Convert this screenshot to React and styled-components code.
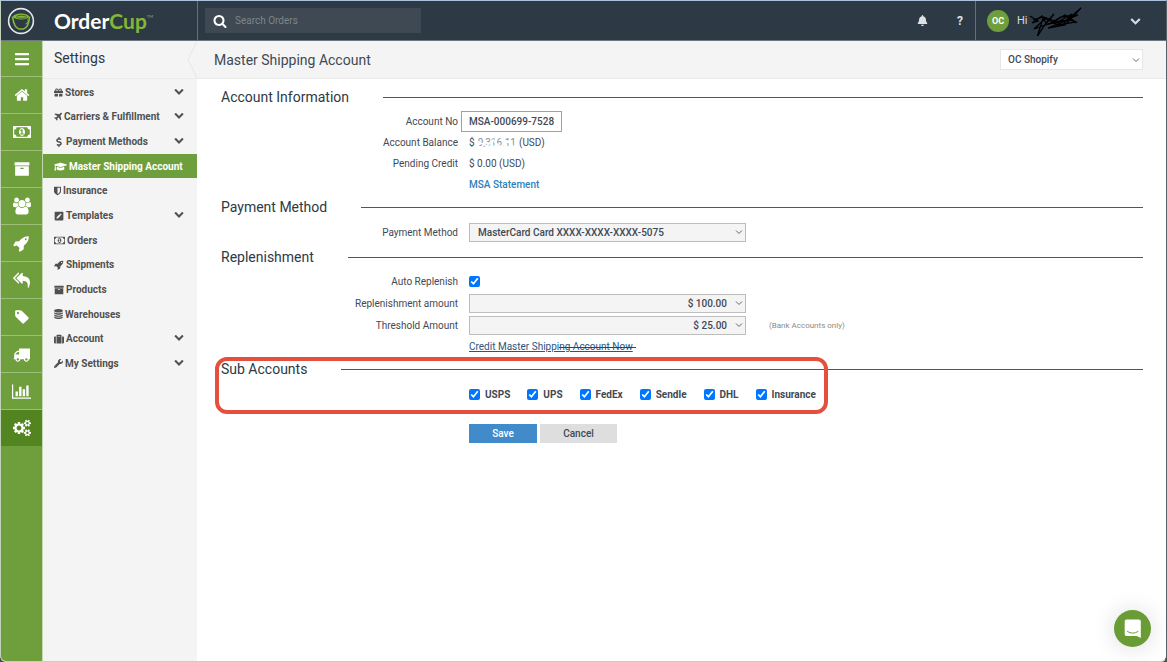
import styled, { createGlobalStyle } from "styled-components"
import {
  FaBars,
  FaBell,
  FaDollarSign,
  FaGift,
  FaGraduationCap,
  FaPenSquare,
  FaSuitcase,
  FaWrench,
} from "react-icons/fa"


const GlobalStyle = createGlobalStyle`
  * {
    box-sizing: border-box;
  }

  body {
    margin: 0;
    background: #4a4a4a;
    color: #3f4954;
    font-family: Roboto, "Liberation Sans", sans-serif;
    font-size: 10px;
  }

  button, input, select {
    font: inherit;
    color: inherit;
  }
`

const Page = styled.div`
  position: relative;
  display: flex;
  flex-direction: column;
  min-height: 100vh;
  background: #fff;
  border: 1px solid #c3d3bb;
  border-top-color: #a9c1db;
  border-right-color: #5b6169;
  border-radius: 0 0 6px 6px;
  overflow: hidden;
`

const TopBar = styled.header`
  display: flex;
  align-items: center;
  height: 40px;
  background: #2d3945;
  border-bottom: 1px solid #6d7780;
  color: #fff;
`

const Brand = styled.a`
  display: flex;
  align-items: center;
  align-self: stretch;
  gap: 19px;
  width: 197px;
  padding-left: 6px;
  border-right: 1px solid #65707a;
  color: #fff;
  text-decoration: none;
`

const BrandName = styled.span`
  font-family: Lato, sans-serif;
  font-size: 21px;
  font-weight: 700;
  line-height: 28px;
`

const BrandAccent = styled.span`
  color: #83b735;
`

const Trademark = styled.sup`
  color: #9aa2a9;
  font-size: 4px;
  font-weight: 400;
  line-height: 0;
  vertical-align: 11px;
`

const SearchBox = styled.label`
  display: flex;
  align-items: center;
  gap: 8px;
  width: 216px;
  height: 25px;
  margin-left: 7px;
  padding-left: 8px;
  background: #3e4954;
`

const SearchInput = styled.input`
  flex: 1;
  min-width: 0;
  padding: 0;
  border: 0;
  outline: 0;
  background: none;

  &::placeholder {
    color: #7f8589;
    opacity: 1;
  }
`

const TopButton = styled.button`
  display: grid;
  place-items: center;
  width: 30px;
  height: 38px;
  padding: 0;
  border: 0;
  background: none;
  color: #dfe2e4;
  font-weight: 700;
  font-size: 12px;
`

const TopActions = styled.div`
  display: flex;
  gap: 8px;
  margin-left: auto;
`

const UserMenu = styled.button`
  display: flex;
  align-items: center;
  align-self: stretch;
  width: 191px;
  padding: 0 25px 0 11px;
  border: 0;
  border-left: 1px solid #65707a;
  background: none;
  color: #d5d9dc;
  font-size: 11px;

  > svg {
    margin-left: auto;
  }
`

const Avatar = styled.span`
  width: 22px;
  margin-right: 8px;
  border-radius: 50%;
  background: #6f9f3c;
  color: #fff;
  font-size: 9px;
  font-weight: 700;
  line-height: 22px;
  text-align: center;
`

const Greeting = styled.span`
  position: relative;
`

const Scribble = styled.svg`
  position: absolute;
  left: 11px;
  top: -12px;
`

const Body = styled.div`
  display: flex;
  flex: 1;
`

const Rail = styled.nav`
  flex: none;
  width: 42px;
  background: #6f9f3c;
  border-right: 1px solid #c3d8ad;
`

const RailLink = styled.a`
  display: grid;
  place-items: center;
  height: 37px;
  border-bottom: 1px solid #9dbf7a;
  background: ${props => props.$active ? "#52841f" : "none"};
  color: #fff;

  &:first-child {
    height: 36px;
  }

  &:last-child {
    border-bottom-color: #6f9f3c;
  }
`

const Sidebar = styled.aside`
  flex: none;
  width: 154px;
  background: #f4f4f4;
`

const SidebarHead = styled.div`
  display: flex;
  justify-content: space-between;
  height: 38px;
  padding-left: 11px;
  border-bottom: 1px solid #ebebeb;
`

const SidebarTitle = styled.h2`
  margin: 0;
  color: #2d3945;
  font-size: 14px;
  font-weight: 400;
  line-height: 34px;
`

const Menu = styled.nav`
  display: grid;
  grid-auto-rows: 1fr;
  min-height: 297px;
  padding-top: 1px;
`

const MenuLink = styled.a`
  display: flex;
  align-items: center;
  gap: 2px;
  margin-bottom: 1px;
  padding: 1px 13px 0 11px;
  background: ${props => props.$active ? "#6f9f3c" : "none"};
  color: ${props => props.$active ? "#fff" : "#505050"};
  font-weight: 700;
  text-decoration: none;
  white-space: nowrap;
`

const Caret = styled.span`
  display: flex;
  margin-left: auto;
  padding-bottom: 3px;
`

const Main = styled.main`
  flex: 1;
  min-width: 0;
`

const PageHead = styled.div`
  display: flex;
  align-items: center;
  justify-content: space-between;
  height: 38px;
  padding: 0 23px 0 17px;
  background: #f4f4f4;
  border-bottom: 1px solid #ebebeb;
`

const PageTitle = styled.h1`
  margin: 0;
  font-size: 14px;
  font-weight: 400;
`

const SelectWrap = styled.span`
  display: inline-grid;
  align-items: center;
  width: ${props => props.$width}px;

  > * {
    grid-area: 1 / 1;
  }

  > svg {
    justify-self: end;
    margin-right: 3px;
    pointer-events: none;
  }
`

const SelectBox = styled.select`
  width: 100%;
  height: ${props => props.$light ? 21 : 19}px;
  padding: 0 18px 0 ${props => props.$light ? 7 : 8}px;
  appearance: none;
  border: 1px solid ${props => props.$light ? "#e6e6e6" : "#bdbdbd"};
  border-radius: 0;
  background: ${props => props.$light ? "#fff" : "#f4f4f4"};
  font-weight: 500;
  text-align-last: ${props => props.$right ? "right" : "left"};
`

const Form = styled.form`
  padding: 8px 23px 0 24px;
`

const Section = styled.section`
  position: relative;
  padding-bottom: ${props => props.$gap}px;
`

const SectionHead = styled.h3`
  display: flex;
  align-items: center;
  gap: 34px;
  height: 20px;
  margin: 0 0 4px;
  color: #2d3945;
  font-size: 14px;
  font-weight: 400;

  &::after {
    content: "";
    flex: 1;
    height: 1px;
    background: #555;
  }
`

const Field = styled.div`
  display: grid;
  grid-template-columns: 237px 1fr;
  column-gap: 11px;
  align-items: center;
  min-height: ${props => props.$tall ? 22 : 21}px;
`

const FieldLabel = styled.label`
  grid-column: 1;
  text-align: right;
`

const FieldValue = styled.div`
  grid-column: 2;
  display: flex;
  align-items: center;
`

const AccountNo = styled.span`
  margin-left: -8px;
  padding: 0 7px;
  border: 1px solid #f4806a;
  font-weight: 500;
  line-height: 19px;
`

const Smudged = styled.span`
  position: relative;
  color: #8a8f94;
  margin: 0 3px;
`

const Eraser = styled.svg`
  position: absolute;
  left: -1px;
  top: 0;
`

const TextLink = styled.a`
  color: #2f7fbd;
  font-weight: 500;
  text-decoration: none;
`

const CreditLink = styled.a`
  position: relative;
  color: #2a5580;
  text-decoration: underline;
`

const Strike = styled.span`
  position: absolute;
  left: 90px;
  right: -3px;
  top: 6px;
  height: 1px;
  background: #33435a;
`

const Hint = styled.small`
  margin-left: 23px;
  color: #8b8b8b;
  font-size: 8px;
`

const Check = styled.input`
  width: 11px;
  height: 11px;
  margin: 0;
  accent-color: #0075ff;
`

const CheckList = styled.div`
  grid-column: 2;
  display: flex;
  gap: 17px;
  padding-top: 1px;
`

const CheckLabel = styled.label`
  display: flex;
  align-items: center;
  gap: 5px;
  font-weight: 700;
`

const Highlight = styled.div`
  position: absolute;
  top: -2px;
  left: -6px;
  width: 613px;
  height: 57px;
  border: 4px solid #e4503d;
  border-radius: 12px;
  pointer-events: none;
`

const Button = styled.button`
  width: ${props => props.$primary ? 68 : 77}px;
  height: 19px;
  margin-right: 3px;
  padding: 0;
  border: 0;
  background: ${props => props.$primary ? "#428bca" : "#dedede"};
  color: ${props => props.$primary ? "#fff" : "#3f4954"};
  font-weight: 500;
`

const ChatButton = styled.button`
  position: fixed;
  right: 16px;
  bottom: 15px;
  display: grid;
  place-items: center;
  width: 37px;
  height: 37px;
  padding: 0;
  border: 0;
  border-radius: 50%;
  background: #6a9c35;
  box-shadow: 0 1px 24px rgba(0, 0, 0, 0.14);
`


// name: [left edge, width, path], all 1792 units tall
const paths = {
  home: [0, 1792, "M1472 992v480q0 26-19 45t-45 19h-384v-384h-256v384h-384q-26 0-45-19t-19-45v-480q0-1 .5-3t.5-3l575-474 575 474q1 2 1 6zm223-69l-62 74q-8 9-21 11h-3q-13 0-21-7l-692-577-692 577q-12 8-24 7-13-2-21-11l-62-74q-8-10-7-23.5t11-21.5l719-599q32-26 76-26t76 26l244 204v-195q0-14 9-23t23-9h192q14 0 23 9t9 23v408l219 182q10 8 11 21.5t-7 23.5z"],
  money: [0, 1920, "M768 1152h384v-96h-128v-448h-114l-148 137 77 80q42-37 55-57h2v288h-128v96zm512-256q0 70-21 142t-59.5 134-101.5 101-138 39-138-39-101.5-101-59.5-134-21-142 21-142 59.5-134 101.5-101 138-39 138 39 101.5 101 59.5 134 21 142zm512 256v-512q-106 0-181-75t-75-181h-1152q0 106-75 181t-181 75v512q106 0 181 75t75 181h1152q0-106 75-181t181-75zm128-832v1152q0 26-19 45t-45 19h-1792q-26 0-45-19t-19-45v-1152q0-26 19-45t45-19h1792q26 0 45 19t19 45z"],
  archive: [0, 1792, "M1088 832q0-26-19-45t-45-19h-256q-26 0-45 19t-19 45 19 45 45 19h256q26 0 45-19t19-45zm576-192v960q0 26-19 45t-45 19h-1408q-26 0-45-19t-19-45v-960q0-26 19-45t45-19h1408q26 0 45 19t19 45zm64-448v256q0 26-19 45t-45 19h-1536q-26 0-45-19t-19-45v-256q0-26 19-45t45-19h1536q26 0 45 19t19 45z"],
  users: [0, 1920, "M593 896q-162 5-265 128h-134q-82 0-138-40.5t-56-118.5q0-353 124-353 6 0 43.5 21t97.5 42.5 119 21.5q67 0 133-23-5 37-5 66 0 159 93 287zm1071 637q0 120-73 189.5t-194 69.5h-874q-121 0-194-69.5t-73-189.5q0-53 3.5-103.5t14-109 26.5-108.5 43-97.5 62-81 85.5-53.5 111.5-20q10 0 43 21.5t73 48 107 48 135 21.5 135-21.5 107-48 73-48 43-21.5q61 0 111.5 20t85.5 53.5 62 81 43 97.5 26.5 108.5 14 109 3.5 103.5zm-1024-1277q0 106-75 181t-181 75-181-75-75-181 75-181 181-75 181 75 75 181zm704 384q0 159-112.5 271.5t-271.5 112.5-271.5-112.5-112.5-271.5 112.5-271.5 271.5-112.5 271.5 112.5 112.5 271.5zm576 225q0 78-56 118.5t-138 40.5h-134q-103-123-265-128 93-128 93-287 0-29-5-66 66 23 133 23 59 0 119-21.5t97.5-42.5 43.5-21q124 0 124 353zm-128-609q0 106-75 181t-181 75-181-75-75-181 75-181 181-75 181 75 75 181z"],
  rocket: [0, 1792, "M1440 448q0-40-28-68t-68-28-68 28-28 68 28 68 68 28 68-28 28-68zm224-288q0 249-75.5 430.5t-253.5 360.5q-81 80-195 176l-20 379q-2 16-16 26l-384 224q-7 4-16 4-12 0-23-9l-64-64q-13-14-8-32l85-276-281-281-276 85q-3 1-9 1-14 0-23-9l-64-64q-17-19-5-39l224-384q10-14 26-16l379-20q96-114 176-195 188-187 358-258t431-71q14 0 24 9.5t10 22.5z"],
  replyAll: [0, 1792, "M640 1082v70q0 42-39 59-13 5-25 5-27 0-45-19l-512-512q-19-19-19-45t19-45l512-512q29-31 70-14 39 17 39 59v69l-397 398q-19 19-19 45t19 45zm1152 58q0 58-17 133.5t-38.5 138-48 125-40.5 90.5l-20 40q-8 17-28 17-6 0-9-1-25-8-23-34 43-400-106-565-64-71-170.5-110.5t-267.5-52.5v251q0 42-39 59-13 5-25 5-27 0-45-19l-512-512q-19-19-19-45t19-45l512-512q29-31 70-14 39 17 39 59v262q411 28 599 221 169 173 169 509z"],
  tag: [0, 1792, "M576 448q0-53-37.5-90.5t-90.5-37.5-90.5 37.5-37.5 90.5 37.5 90.5 90.5 37.5 90.5-37.5 37.5-90.5zm1067 576q0 53-37 90l-491 492q-39 37-91 37-53 0-90-37l-715-716q-38-37-64.5-101t-26.5-117v-416q0-52 38-90t90-38h416q53 0 117 26.5t102 64.5l715 714q37 39 37 91z"],
  truck: [0, 1792, "M640 1408q0-52-38-90t-90-38-90 38-38 90 38 90 90 38 90-38 38-90zm-384-512h384v-256h-158q-13 0-22 9l-195 195q-9 9-9 22v30zm1280 512q0-52-38-90t-90-38-90 38-38 90 38 90 90 38 90-38 38-90zm256-1088v1024q0 15-4 26.5t-13.5 18.5-16.5 11.5-23.5 6-22.5 2-25.5 0-22.5-.5q0 106-75 181t-181 75-181-75-75-181h-384q0 106-75 181t-181 75-181-75-75-181h-64q-3 0-22.5.5t-25.5 0-22.5-2-23.5-6-16.5-11.5-13.5-18.5-4-26.5q0-26 19-45t45-19v-320q0-8-.5-35t0-38 2.5-34.5 6.5-37 14-30.5 22.5-30l198-198q19-19 50.5-32t58.5-13h160v-192q0-26 19-45t45-19h1024q26 0 45 19t19 45z"],
  chart: [0, 2048, "M640 896v512h-256v-512h256zm384-512v1024h-256v-1024h256zm1024 1152v128h-2048v-1536h128v1408h1920zm-640-896v768h-256v-768h256zm384-384v1152h-256v-1152h256z"],
  cogs: [0, 1920, "M896 896q0-106-75-181t-181-75-181 75-75 181 75 181 181 75 181-75 75-181zm768 512q0-52-38-90t-90-38-90 38-38 90q0 53 37.5 90.5t90.5 37.5 90.5-37.5 37.5-90.5zm0-1024q0-52-38-90t-90-38-90 38-38 90q0 53 37.5 90.5t90.5 37.5 90.5-37.5 37.5-90.5zm-384 421v185q0 10-7 19.5t-16 10.5l-155 24q-11 35-32 76 34 48 90 115 7 11 7 20 0 12-7 19-23 30-82.5 89.5t-78.5 59.5q-11 0-21-7l-115-90q-37 19-77 31-11 108-23 155-7 24-30 24h-186q-11 0-20-7.5t-10-17.5l-23-153q-34-10-75-31l-118 89q-7 7-20 7-11 0-21-8-144-133-144-160 0-9 7-19 10-14 41-53t47-61q-23-44-35-82l-152-24q-10-1-17-9.5t-7-19.5v-185q0-10 7-19.5t16-10.5l155-24q11-35 32-76-34-48-90-115-7-11-7-20 0-12 7-20 22-30 82-89t79-59q11 0 21 7l115 90q34-18 77-32 11-108 23-154 7-24 30-24h186q11 0 20 7.5t10 17.5l23 153q34 10 75 31l118-89q8-7 20-7 11 0 21 8 144 133 144 160 0 8-7 19-12 16-42 54t-45 60q23 48 34 82l152 23q10 2 17 10.5t7 19.5zm640 533v140q0 16-149 31-12 27-30 52 51 113 51 138 0 4-4 7-122 71-124 71-8 0-46-47t-52-68q-20 2-30 2t-30-2q-14 21-52 68t-46 47q-2 0-124-71-4-3-4-7 0-25 51-138-18-25-30-52-149-15-149-31v-140q0-16 149-31 13-29 30-52-51-113-51-138 0-4 4-7 4-2 35-20t59-34 30-16q8 0 46 46.5t52 67.5q20-2 30-2t30 2q51-71 92-112l6-2q4 0 124 70 4 3 4 7 0 25-51 138 17 23 30 52 149 15 149 31zm0-1024v140q0 16-149 31-12 27-30 52 51 113 51 138 0 4-4 7-122 71-124 71-8 0-46-47t-52-68q-20 2-30 2t-30-2q-14 21-52 68t-46 47q-2 0-124-71-4-3-4-7 0-25 51-138-18-25-30-52-149-15-149-31v-140q0-16 149-31 13-29 30-52-51-113-51-138 0-4 4-7 4-2 35-20t59-34 30-16q8 0 46 46.5t52 67.5q20-2 30-2t30 2q51-71 92-112l6-2q4 0 124 70 4 3 4 7 0 25-51 138 17 23 30 52 149 15 149 31z"],
  plane: [160, 1440, "M1568 160q44 52 12 148t-108 172l-161 161 160 696q5 19-12 33l-128 96q-7 6-19 6-4 0-7-1-15-3-21-16l-279-508-259 259 53 194q5 17-8 31l-96 96q-9 9-23 9h-2q-15-2-24-13l-189-252-252-189q-11-7-13-23-1-13 9-25l96-97q9-9 23-9 6 0 8 1l194 53 259-259-508-279q-14-8-17-24-2-16 9-27l128-128q14-13 30-8l665 159 160-160q76-76 172-108t148 12z"],
  shield: [256, 1280, "M1344 960v-640h-448v1137q119-63 213-137 235-184 235-360zm192-768v768q0 86-33.5 170.5t-83 150-118 127.5-126.5 103-121 77.5-89.5 49.5-42.5 20q-12 6-26 6t-26-6q-16-7-42.5-20t-89.5-49.5-121-77.5-126.5-103-118-127.5-83-150-33.5-170.5v-768q0-26 19-45t45-19h1152q26 0 45 19t19 45z"],
  database: [128, 1536, "M896 768q237 0 443-43t325-127v170q0 69-103 128t-280 93.5-385 34.5-385-34.5-280-93.5-103-128v-170q119 84 325 127t443 43zm0 768q237 0 443-43t325-127v170q0 69-103 128t-280 93.5-385 34.5-385-34.5-280-93.5-103-128v-170q119 84 325 127t443 43zm0-384q237 0 443-43t325-127v170q0 69-103 128t-280 93.5-385 34.5-385-34.5-280-93.5-103-128v-170q119 84 325 127t443 43zm0-1152q208 0 385 34.5t280 93.5 103 128v128q0 69-103 128t-280 93.5-385 34.5-385-34.5-280-93.5-103-128v-128q0-69 103-128t280-93.5 385-34.5z"],
  search: [0, 1792, "M1216 832q0-185-131.5-316.5t-316.5-131.5-316.5 131.5-131.5 316.5 131.5 316.5 316.5 131.5 316.5-131.5 131.5-316.5zm512 832q0 52-38 90t-90 38q-54 0-90-38l-343-342q-179 124-399 124-143 0-273.5-55.5t-225-150-150-225-55.5-273.5 55.5-273.5 150-225 225-150 273.5-55.5 273.5 55.5 225 150 150 225 55.5 273.5q0 220-124 399l343 343q37 37 37 90z"],
  chevron: [0, 1792, "M1683 808l-742 741q-19 19-45 19t-45-19l-742-741q-19-19-19-45.5t19-45.5l166-165q19-19 45-19t45 19l531 531 531-531q19-19 45-19t45 19l166 165q19 19 19 45.5t-19 45.5z"],
}

function Glyph ({ name, size, height = size }) {
  const [left, width, d] = paths[name]
  return (
    <svg
      width={size}
      height={height}
      viewBox={`${left} 0 ${width} 1792`}
      fill="currentColor"
      aria-hidden="true"
    >
      <path d={d}/>
    </svg>
  )
}

function Logo () {
  return (
    <svg width="28" height="28" viewBox="0 0 28 28" fill="none" aria-hidden="true">
      <circle cx="14" cy="14" r="12.4" stroke="#e4e7e9" strokeWidth="1.6"/>
      <path
        d="M5.5 9.5C6.5 17 8.500 21 12 22h4.500c3.500-1 5.500-5.500 6-12.500"
        stroke="#83b735"
        strokeWidth="1.7"
      />
      <ellipse cx="14" cy="9.5" rx="8" ry="3" fill="#83b735"/>
      <ellipse cx="14.5" cy="9.8" rx="5" ry="1.5" stroke="#2d3945" strokeWidth=".7"/>
      <path d="M20 13c2 0 2 2-1.5 4" stroke="#83b735"/>
    </svg>
  )
}

function Select ({ id, width, light, right, children }) {
  return (
    <SelectWrap $width={width}>
      <SelectBox
        id={id}
        $light={light}
        $right={right}
        aria-label={light ? "Store" : undefined}
      >
        <option>{children}</option>
      </SelectBox>
      <svg width="8" height="6" viewBox="0 0 8 6" fill="none" stroke="#666">
        <path d="M1 1.5l3 3 3-3"/>
      </svg>
    </SelectWrap>
  )
}

const railItems = [
  ["Menu", <FaBars size={16}/>],
  ["Home", <Glyph name="home" size={16}/>],
  ["Payments", <Glyph name="money" size={18}/>],
  ["Products", <Glyph name="archive" size={16}/>],
  ["Customers", <Glyph name="users" size={18}/>],
  ["Shipments", <Glyph name="rocket" size={17}/>],
  ["Returns", <Glyph name="replyAll" size={17}/>],
  ["Tags", <Glyph name="tag" size={16}/>],
  ["Carriers", <Glyph name="truck" size={17}/>],
  ["Reports", <Glyph name="chart" size={19}/>],
  ["Settings", <Glyph name="cogs" size={18}/>, true],
]

const menuItems = [
  { label: "Stores", icon: <FaGift size={9}/>, open: true },
  { label: "Carriers & Fulfillment", icon: <Glyph name="plane" size={8} height={10}/>, open: true },
  { label: "Payment Methods", icon: <FaDollarSign width={6} height={10}/>, open: true },
  { label: "Master Shipping Account", icon: <FaGraduationCap size={13}/>, active: true },
  { label: "Insurance", icon: <Glyph name="shield" size={7} height={10}/> },
  { label: "Templates", icon: <FaPenSquare size={10}/>, open: true },
  { label: "Orders", icon: <Glyph name="money" size={11}/> },
  { label: "Shipments", icon: <Glyph name="rocket" size={10}/> },
  { label: "Products", icon: <Glyph name="archive" size={10}/> },
  { label: "Warehouses", icon: <Glyph name="database" size={9} height={10}/> },
  { label: "Account", icon: <FaSuitcase size={10}/>, open: true },
  { label: "My Settings", icon: <FaWrench size={9}/>, open: true },
]

const subAccounts = ["USPS", "UPS", "FedEx", "Sendle", "DHL", "Insurance"]


export default function App () {
  return (
    <Page>
      <GlobalStyle/>
      <TopBar>
        <Brand href="#">
          <Logo/>
          <BrandName>
            Order<BrandAccent>Cup</BrandAccent><Trademark>TM</Trademark>
          </BrandName>
        </Brand>
        <SearchBox>
          <Glyph name="search" size={14}/>
          <SearchInput type="text" placeholder="Search Orders" aria-label="Search Orders"/>
        </SearchBox>
        <TopActions>
          <TopButton aria-label="Notifications"><FaBell size={11}/></TopButton>
          <TopButton>?</TopButton>
        </TopActions>
        <UserMenu>
          <Avatar>OC</Avatar>
          <Greeting>
            Hi
            <Scribble width="60" height="34" viewBox="0 0 60 34" fill="none" stroke="#000" strokeWidth="1.3">
              <path d="M2 14l8 5-6 2 10-7 4 7 8-9-10 12-7 11 3-9 3-10 13 5 16-9-8 9 17-15-16 17-17 3 22-9 6 3-19 3-11-7-12 11 20-7 17-2 5 3"/>
              <path d="M5 18l10-3 12 4 10-6 9 6M20 22l16-3 14-6-17 2-10 6"/>
            </Scribble>
          </Greeting>
          <Glyph name="chevron" size={11}/>
        </UserMenu>
      </TopBar>
      <Body>
        <Rail>
          {railItems.map(([label, icon, active]) => (
            <RailLink key={label} href="#" aria-label={label} $active={active}>
              {icon}
            </RailLink>
          ))}
        </Rail>
        <Sidebar>
          <SidebarHead>
            <SidebarTitle>Settings</SidebarTitle>
            <svg width="10" height="37" viewBox="0 0 10 37" fill="none" stroke="#e6e6e6">
              <path d="M10 0L1 18.5 10 37"/>
            </svg>
          </SidebarHead>
          <Menu>
            {menuItems.map(({ label, icon, open, active }) => (
              <MenuLink key={label} href="#" $active={active}>
                {icon}
                {label}
                {open && <Caret><Glyph name="chevron" size={10}/></Caret>}
              </MenuLink>
            ))}
          </Menu>
        </Sidebar>
        <Main>
          <PageHead>
            <PageTitle>Master Shipping Account</PageTitle>
            <Select light width={143}>OC Shopify</Select>
          </PageHead>
          <Form>
            <Section $gap={2}>
              <SectionHead>Account Information</SectionHead>
              <Field>
                <FieldLabel as="span">Account No</FieldLabel>
                <FieldValue><AccountNo>MSA-000699-7528</AccountNo></FieldValue>
              </Field>
              <Field>
                <FieldLabel as="span">Account Balance</FieldLabel>
                <FieldValue>
                  $
                  <Smudged>
                    9,316.11
                    <Eraser width="42" height="12" viewBox="0 0 42 12" fill="none" stroke="#fff" strokeWidth="1.6">
                      <path d="M0 4l10 5 6-6 7 7 8-6 6 6 5-5M0 10l8 1 10-2 20 1"/>
                    </Eraser>
                  </Smudged>
                  (USD)
                </FieldValue>
              </Field>
              <Field>
                <FieldLabel as="span">Pending Credit</FieldLabel>
                <FieldValue>$ 0.00 (USD)</FieldValue>
              </Field>
              <Field>
                <FieldValue><TextLink href="#">MSA Statement</TextLink></FieldValue>
              </Field>
            </Section>
            <Section $gap={4}>
              <SectionHead>Payment Method</SectionHead>
              <Field $tall>
                <FieldLabel htmlFor="payment">Payment Method</FieldLabel>
                <FieldValue>
                  <Select id="payment" width={277}>MasterCard Card XXXX-XXXX-XXXX-5075</Select>
                </FieldValue>
              </Field>
            </Section>
            <Section $gap={2}>
              <SectionHead>Replenishment</SectionHead>
              <Field>
                <FieldLabel htmlFor="auto">Auto Replenish</FieldLabel>
                <FieldValue><Check id="auto" type="checkbox" defaultChecked/></FieldValue>
              </Field>
              <Field $tall>
                <FieldLabel htmlFor="amount">Replenishment amount</FieldLabel>
                <FieldValue>
                  <Select id="amount" width={277} right>$ 100.00</Select>
                </FieldValue>
              </Field>
              <Field $tall>
                <FieldLabel htmlFor="threshold">Threshold Amount</FieldLabel>
                <FieldValue>
                  <Select id="threshold" width={277} right>$ 25.00</Select>
                  <Hint>(Bank Accounts only)</Hint>
                </FieldValue>
              </Field>
              <Field>
                <FieldValue>
                  <CreditLink href="#">
                    Credit Master Shipping Account Now
                    <Strike/>
                  </CreditLink>
                </FieldValue>
              </Field>
            </Section>
            <Section $gap={19}>
              <SectionHead>Sub Accounts</SectionHead>
              <Field>
                <CheckList>
                  {subAccounts.map(name => (
                    <CheckLabel key={name}>
                      <Check type="checkbox" defaultChecked/>
                      {name}
                    </CheckLabel>
                  ))}
                </CheckList>
              </Field>
              <Highlight/>
            </Section>
            <Field>
              <FieldValue>
                <Button type="button" $primary>Save</Button>
                <Button type="button">Cancel</Button>
              </FieldValue>
            </Field>
          </Form>
        </Main>
      </Body>
      <ChatButton aria-label="Open chat">
        <svg width="18" height="20" viewBox="0 0 18 20" fill="none">
          <path d="M2.5.5H15a1.800 1.800 0 0 1 1.800 1.800V19l-4-2H2.500a1.800 1.800 0 0 1-1.800-1.800V2.300A1.800 1.800 0 0 1 2.500.5z" fill="#fff"/>
          <path d="M3.5 12.5q5.200 3.500 10.500 0" stroke="#6a9c35" strokeLinecap="round"/>
        </svg>
      </ChatButton>
    </Page>
  )
}
